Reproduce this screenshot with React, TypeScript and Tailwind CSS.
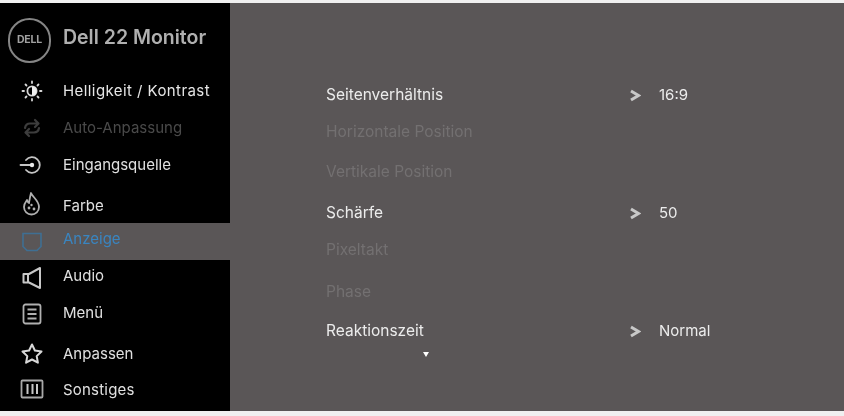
const IconSun = () => (
  <svg width="24" height="24" viewBox="0 0 24 24" fill="none" stroke="#d8d8d8" strokeWidth="1.800" strokeLinecap="round">
    <circle cx="12" cy="12" r="4.600" fill="#000" />
    <path d="M12 7.400a4.600 4.600 0 0 1 0 9.200z" fill="#f0f0f0" stroke="none" />
    <path d="M12 2.500v1.500M12 20v1.500M2.500 12H4M20 12h1.500M5.500 5.500l1 1M17.500 17.500l1 1M5.500 18.500l1-1M17.500 6.500l1-1" />
  </svg>
)

const IconAuto = () => (
  <svg width="24" height="24" viewBox="0 0 24 24" fill="none" stroke="#3d3d3d" strokeWidth="2.200" strokeLinecap="round" strokeLinejoin="round">
    <path d="M5 12c.5-3 2.500-4.500 5-4.500h8M15 4l3.500 3.500L15 11" />
    <path d="M19 12c-.5 3-2.500 4.500-5 4.500H6M9 13l-3.500 3.500L9 20" />
  </svg>
)

const IconInput = () => (
  <svg width="26" height="24" viewBox="0 0 26 24" fill="none" stroke="#c4c4c4" strokeWidth="1.800" strokeLinecap="round">
    <path d="M7 7a7.800 7.800 0 1 1 0 10" />
    <path d="M1.500 12H12" />
    <circle cx="13" cy="12" r="2.200" fill="#e8e8e8" stroke="none" />
  </svg>
)

const IconColor = () => (
  <svg width="24" height="26" viewBox="0 0 24 26" fill="none" stroke="#b0b0b0" strokeWidth="1.800" strokeLinejoin="round">
    <path d="M11 2c1 3.500 8 7.500 8 14a7.500 7.500 0 0 1-15 0c0-3 1.500-5 3-7 .5 1.500 1 2.500 2 3C9.500 9 10 5.500 11 2z" />
    <circle cx="9" cy="17" r="1.400" fill="#b0b0b0" stroke="none" />
    <circle cx="14" cy="18" r="1.400" fill="#b0b0b0" stroke="none" />
    <circle cx="11.500" cy="14" r="1.200" fill="#b0b0b0" stroke="none" />
  </svg>
)

const IconDisplay = () => (
  <svg width="24" height="24" viewBox="0 0 24 24" fill="none" stroke="#3f6f93" strokeWidth="1.600">
    <path d="M3 3.500h18v13l-4 4H7l-4-4z" />
  </svg>
)

const IconAudio = () => (
  <svg width="24" height="26" viewBox="0 0 24 26" fill="none" stroke="#c8c8c8" strokeWidth="2" strokeLinejoin="round">
    <path d="M20 3v20L9 17.500H3.500V9H9z" />
    <path d="M8 9v8.500" />
  </svg>
)

const IconMenu = () => (
  <svg width="24" height="24" viewBox="0 0 24 24" fill="none" stroke="#b0b0b0" strokeWidth="1.800">
    <rect x="3.500" y="2.500" width="17" height="19" rx="2" />
    <path d="M7.500 7.500h9M7.500 12h9M7.500 16.500h9" strokeWidth="2" />
  </svg>
)

const IconStar = () => (
  <svg width="24" height="24" viewBox="0 0 24 24" fill="none" stroke="#d8d8d8" strokeWidth="2" strokeLinejoin="round">
    <path d="M12 2.500l2.900 6 6.600 1-4.800 4.600 1.200 6.600-5.900-3.200-5.900 3.200 1.200-6.600L2.500 9.500l6.600-1z" />
  </svg>
)

const IconOther = () => (
  <svg width="24" height="24" viewBox="0 0 24 24" fill="none" stroke="#a8a8a8" strokeWidth="1.800">
    <rect x="1.500" y="3.500" width="21" height="17" rx="1" />
    <path d="M7.500 7v10M12.500 7v10M17 7v10" stroke="#c8c8c8" strokeWidth="2" />
  </svg>
)

const Logo = () => (
  <div className="flex h-[45px] w-[43px] items-center justify-center rounded-full border-2 border-[#858585]">
    <span className="text-[10.5px] font-bold tracking-[-0.2px] text-[#a0a0a0]">DELL</span>
  </div>
)

const menu = [
  { label: 'Helligkeit / Kontrast', icon: <IconSun />, h: 'h-[38px]', text: 'text-[#e6e6e6] tracking-[0.42px]' },
  { label: 'Auto-Anpassung', icon: <IconAuto />, h: 'h-[36px]', text: 'text-[#4a4a4a]' },
  { label: 'Eingangsquelle', icon: <IconInput />, h: 'h-[38px]', text: 'text-[#e0e0e0]' },
  { label: 'Farbe', icon: <IconColor />, h: 'h-[39px]', text: 'mt-[5px] text-[#e0e0e0]' },
  { label: 'Anzeige', icon: <IconDisplay />, h: 'h-[37px]', text: 'mb-[5px] text-[#3a85c0]', active: true },
  { label: 'Audio', icon: <IconAudio />, h: 'h-[36px]', text: 'mb-[4px] text-[#e0e0e0]' },
  { label: 'Menü', icon: <IconMenu />, h: 'h-[36px]', text: 'mb-[2px] text-[#e0e0e0]' },
  { label: 'Anpassen', icon: <IconStar />, h: 'h-[44px]', text: 'text-[#e0e0e0]' },
  { label: 'Sonstiges', icon: <IconOther />, h: 'h-[26px]', text: 'mt-[2px] tracking-[0.2px] text-[#e0e0e0]' },
]

const rows = [
  { label: 'Seitenverhältnis', value: '16:9', h: 'h-[38px]' },
  { label: 'Horizontale Position', h: 'h-[36px]' },
  { label: 'Vertikale Position', h: 'h-[44px]' },
  { label: 'Schärfe', value: '50', h: 'h-[38px]' },
  { label: 'Pixeltakt', h: 'h-[36px]' },
  { label: 'Phase', h: 'h-[48px]' },
  { label: 'Reaktionszeit', value: 'Normal', h: 'h-[30px]' },
]

export default function App() {
  return (
    <div className="h-[416px] w-[844px] overflow-hidden bg-[#f0f0f0] pt-[3px] pb-[5px] font-['Inter',sans-serif] blur-[0.5px]">
      <div className="flex h-[408px]">
        <div className="w-[230px] shrink-0 bg-black">
          <div className="flex h-[69px] items-center pt-[5px] pl-[8px]">
            <Logo />
            <span className="mb-[4px] ml-[12px] text-[19.5px] font-semibold text-[#b0b0b0]">Dell 22 Monitor</span>
          </div>
          {menu.map((item) => (
            <div
              key={item.label}
              className={`flex items-center ${item.h} ${item.active ? 'bg-[#5a5657]' : ''}`}
            >
              <div className="flex w-[63px] justify-center">{item.icon}</div>
              <span className={`text-[15px] ${item.text}`}>{item.label}</span>
            </div>
          ))}
        </div>

        <div className="flex-1 bg-[#5a5657] pt-[73px] pl-[96px]">
          {rows.map((row) => (
            <div key={row.label} className={`flex items-center ${row.h}`}>
              <span className={`w-[303px] text-[15.500px] ${row.value ? 'text-[#ececec]' : 'text-[#737071]'}`}>
                {row.label}
              </span>
              {row.value && (
                <>
                  <svg width="12" height="13" viewBox="0 0 12 13" className="mr-[18px]">
                    <path d="M2 2l7.500 4.500L2 11" fill="none" stroke="#c8c8c8" strokeWidth="3" strokeLinejoin="miter" />
                  </svg>
                  <span className="text-[15px] text-[#ececec]">{row.value}</span>
                </>
              )}
            </div>
          ))}
          <div className="mt-[6px] ml-[97px] h-0 w-0 border-x-[3.500px] border-t-[5px] border-x-transparent border-t-white" />
        </div>
      </div>
    </div>
  )
}
